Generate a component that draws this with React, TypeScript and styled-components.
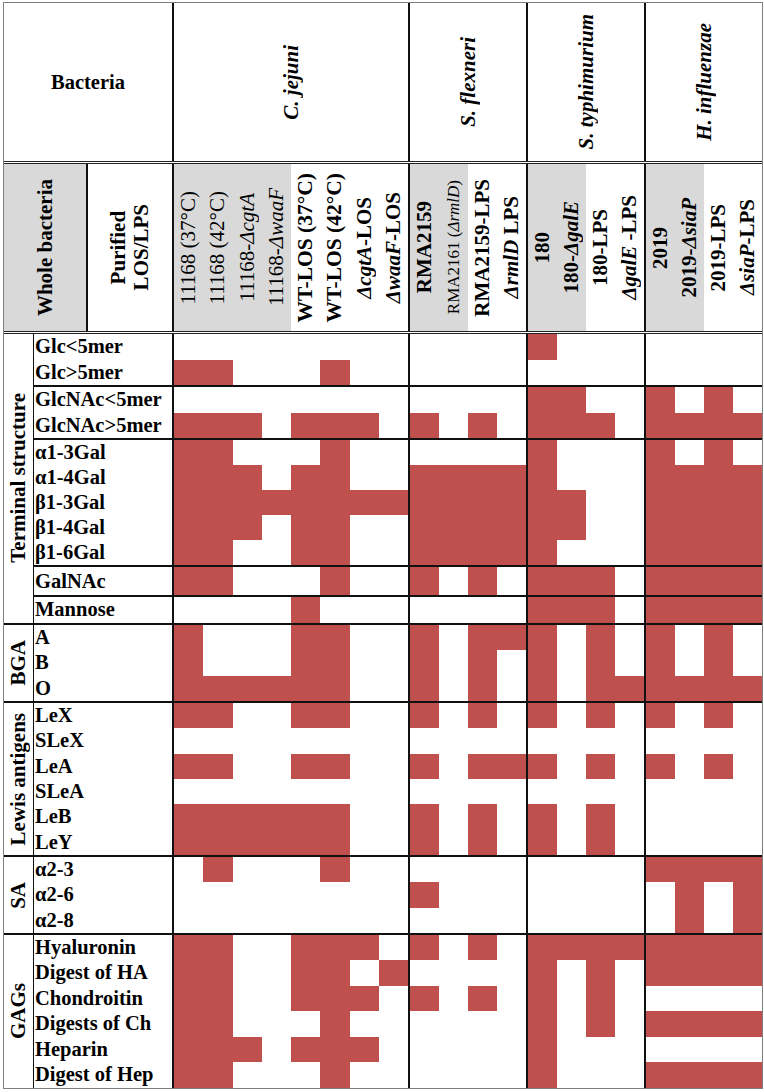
import type { ReactElement, ReactNode } from "react";
import styled, { createGlobalStyle } from "styled-components";

const RED = "#c0504d";
const GRAY = "#d9d9d9";
const INK = "#111";

const GlobalStyle = createGlobalStyle`
  html, body {
    margin: 0;
    padding: 0;
    background: #fff;
  }
  body {
    font-family: "Liberation Serif", "Times New Roman", serif;
    color: #000;
  }
`;

const Page = styled.div`
  padding: 2px 0 0 3px;
`;

const Table = styled.div`
  width: 760px;
  box-sizing: border-box;
  border: 1px solid #7f7f7f;
`;

const HeadTop = styled.div`
  display: grid;
  grid-template-columns: 168px 236px 118px 118px 118px;
  height: 161px;
  box-sizing: border-box;
  border-bottom: 3px double #222;
`;

const HeadBottom = styled.div`
  display: grid;
  grid-template-columns: 82px 86px 236px 118px 118px 118px;
  height: 170px;
  box-sizing: border-box;
  border-bottom: 3px double #222;
`;

const HeadCell = styled.div<{ $line?: boolean; $gray?: boolean }>`
  display: flex;
  align-items: center;
  justify-content: center;
  box-sizing: border-box;
  background: ${p => (p.$gray ? GRAY : "#fff")};
  border-left: ${p => (p.$line ? `2px solid ${INK}` : "none")};
  overflow: hidden;
`;

const Title = styled.span`
  font-size: 20.5px;
  font-weight: 700;
`;

const Vert = styled.span<{ $size?: number; $weight?: number; $italic?: boolean }>`
  writing-mode: vertical-rl;
  transform: rotate(180deg);
  white-space: nowrap;
  text-align: center;
  font-size: ${p => p.$size ?? 21}px;
  font-weight: ${p => p.$weight ?? 700};
  font-style: ${p => (p.$italic ? "italic" : "normal")};
  line-height: 23px;
`;

const StrainBlock = styled.div<{ $cols: number }>`
  display: grid;
  grid-template-columns: repeat(${p => p.$cols}, 1fr);
  box-sizing: border-box;
  border-left: 2px solid ${INK};
`;

const StrainCell = styled.div<{ $gray: boolean }>`
  display: flex;
  align-items: center;
  justify-content: center;
  background: ${p => (p.$gray ? GRAY : "#fff")};
  overflow: visible;
`;

const Section = styled.div<{ $last?: boolean }>`
  display: grid;
  grid-template-columns: 30px 728px;
  border-bottom: ${p => (p.$last ? "none" : `2px solid ${INK}`)};
`;

const SectionLabel = styled.div`
  display: flex;
  align-items: center;
  justify-content: center;
  box-sizing: border-box;
  border-right: 1.5px solid ${INK};
  overflow: hidden;
`;

const SubGroup = styled.div<{ $last: boolean }>`
  display: grid;
  grid-template-columns: 138px 236px 118px 118px 118px;
  border-bottom: ${p => (p.$last ? "none" : `2px solid ${INK}`)};
`;

const LabelList = styled.div`
  display: flex;
  flex-direction: column;
`;

const RowLabel = styled.div<{ $h: number }>`
  height: ${p => p.$h}px;
  line-height: ${p => p.$h}px;
  padding-left: 1px;
  font-size: 20.5px;
  font-weight: 700;
  white-space: nowrap;
  overflow: hidden;
`;

const DataBlock = styled.div<{ $cols: number; $h: number }>`
  display: grid;
  grid-template-columns: repeat(${p => p.$cols}, 1fr);
  grid-auto-rows: ${p => p.$h}px;
  box-sizing: border-box;
  border-left: 2px solid ${INK};
`;

const Cell = styled.div<{ $on: boolean }>`
  background: ${p => (p.$on ? RED : "#fff")};
`;

const SPECIES = [
  { name: "C. jejuni", start: 0, span: 8 },
  { name: "S. flexneri", start: 8, span: 4 },
  { name: "S. typhimurium", start: 12, span: 4 },
  { name: "H. influenzae", start: 16, span: 4 },
];

type Strain = { label: ReactNode; gray: boolean; weight?: number; size?: number };

const STRAINS: Strain[] = [
  { label: "11168 (37°C)", gray: true, weight: 400 },
  { label: "11168 (42°C)", gray: true, weight: 400 },
  { label: <>11168-<i>ΔcgtA</i></>, gray: true, weight: 400 },
  { label: <>11168-<i>ΔwaaF</i></>, gray: true, weight: 400 },
  { label: "WT-LOS (37°C)", gray: false, size: 21.5 },
  { label: "WT-LOS (42°C)", gray: false, size: 21.5 },
  { label: <><i>ΔcgtA</i>-LOS</>, gray: false },
  { label: <><i>ΔwaaF</i>-LOS</>, gray: false },
  { label: "RMA2159", gray: true },
  { label: <>RMA2161 (<i>ΔrmlD</i>)</>, gray: true, weight: 400, size: 17 },
  { label: "RMA2159-LPS", gray: false },
  { label: <><i>ΔrmlD</i> LPS</>, gray: false },
  { label: "180", gray: true },
  { label: <>180-<i>ΔgalE</i></>, gray: true },
  { label: "180-LPS", gray: false },
  { label: <><i>ΔgalE</i> -LPS</>, gray: false },
  { label: "2019", gray: true },
  { label: <>2019-<i>ΔsiaP</i></>, gray: true },
  { label: "2019-LPS", gray: false },
  { label: <><i>ΔsiaP</i>-LPS</>, gray: false },
];

type Sub = { h: number; rows: [string, string][] };
type SectionData = { label: string; subs: Sub[] };

// one char per strain column, 1 = binding (red)
const SECTIONS: SectionData[] = [
  {
    label: "Terminal structure",
    subs: [
      {
        h: 25.5,
        rows: [
          ["Glc<5mer", "00000000000010000000"],
          ["Glc>5mer", "11000100000000000000"],
        ],
      },
      {
        h: 25.5,
        rows: [
          ["GlcNAc<5mer", "00000000000011001010"],
          ["GlcNAc>5mer", "11101110101011101111"],
        ],
      },
      {
        h: 25,
        rows: [
          ["α1-3Gal", "11000100000010001010"],
          ["α1-4Gal", "11101100111110001111"],
          ["β1-3Gal", "11111111111111001111"],
          ["β1-4Gal", "11101100111111001111"],
          ["β1-6Gal", "11001100111110001111"],
        ],
      },
      { h: 28, rows: [["GalNAc", "11000100101011101111"]] },
      { h: 25.5, rows: [["Mannose", "00001000000011101111"]] },
    ],
  },
  {
    label: "BGA",
    subs: [
      {
        h: 25.5,
        rows: [
          ["A", "10001100101110101010"],
          ["B", "10001100101010101010"],
          ["O", "11111100101010111111"],
        ],
      },
    ],
  },
  {
    label: "Lewis antigens",
    subs: [
      {
        h: 25.33,
        rows: [
          ["LeX", "11001100101010101010"],
          ["SLeX", "00000000000000000000"],
          ["LeA", "11001100101110101010"],
          ["SLeA", "00000000000000000000"],
          ["LeB", "11111100101010100000"],
          ["LeY", "11111100101010100000"],
        ],
      },
    ],
  },
  {
    label: "SA",
    subs: [
      {
        h: 25.33,
        rows: [
          ["α2-3", "01000100000000001111"],
          ["α2-6", "00000000100000000101"],
          ["α2-8", "00000000000000000101"],
        ],
      },
    ],
  },
  {
    label: "GAGs",
    subs: [
      {
        h: 25.5,
        rows: [
          ["Hyaluronin", "11001110101011111111"],
          ["Digest of HA", "11001101000010101111"],
          ["Chondroitin", "11001110101010100000"],
          ["Digests of Ch", "11000100000010101111"],
          ["Heparin", "11101110000010000000"],
          ["Digest of Hep", "11000100000010001111"],
        ],
      },
    ],
  },
];

function SubGroupRows({ sub, last }: { sub: Sub; last: boolean }): ReactElement {
  return (
    <SubGroup $last={last}>
      <LabelList>
        {sub.rows.map(([label]) => (
          <RowLabel key={label} $h={sub.h}>
            {label}
          </RowLabel>
        ))}
      </LabelList>
      {SPECIES.map(sp => (
        <DataBlock key={sp.name} $cols={sp.span} $h={sub.h}>
          {sub.rows.flatMap(([label, bits]) =>
            bits
              .slice(sp.start, sp.start + sp.span)
              .split("")
              .map((b, i) => <Cell key={`${label}-${i}`} $on={b === "1"} />)
          )}
        </DataBlock>
      ))}
    </SubGroup>
  );
}

export default function App(): ReactElement {
  return (
    <Page>
      <GlobalStyle />
      <Table>
        <HeadTop>
          <HeadCell>
            <Title>Bacteria</Title>
          </HeadCell>
          {SPECIES.map(sp => (
            <HeadCell key={sp.name} $line>
              <Vert $italic>{sp.name}</Vert>
            </HeadCell>
          ))}
        </HeadTop>
        <HeadBottom>
          <HeadCell $gray>
            <Vert>Whole bacteria</Vert>
          </HeadCell>
          <HeadCell $line>
            <Vert>
              Purified
              <br />
              LOS/LPS
            </Vert>
          </HeadCell>
          {SPECIES.map(sp => (
            <StrainBlock key={sp.name} $cols={sp.span}>
              {STRAINS.slice(sp.start, sp.start + sp.span).map((st, i) => (
                <StrainCell key={i} $gray={st.gray}>
                  <Vert $weight={st.weight} $size={st.size}>
                    {st.label}
                  </Vert>
                </StrainCell>
              ))}
            </StrainBlock>
          ))}
        </HeadBottom>
        {SECTIONS.map((sec, si) => (
          <Section key={sec.label} $last={si === SECTIONS.length - 1}>
            <SectionLabel>
              <Vert $size={21}>{sec.label}</Vert>
            </SectionLabel>
            <div>
              {sec.subs.map((sub, i) => (
                <SubGroupRows key={i} sub={sub} last={i === sec.subs.length - 1} />
              ))}
            </div>
          </Section>
        ))}
      </Table>
    </Page>
  );
}
